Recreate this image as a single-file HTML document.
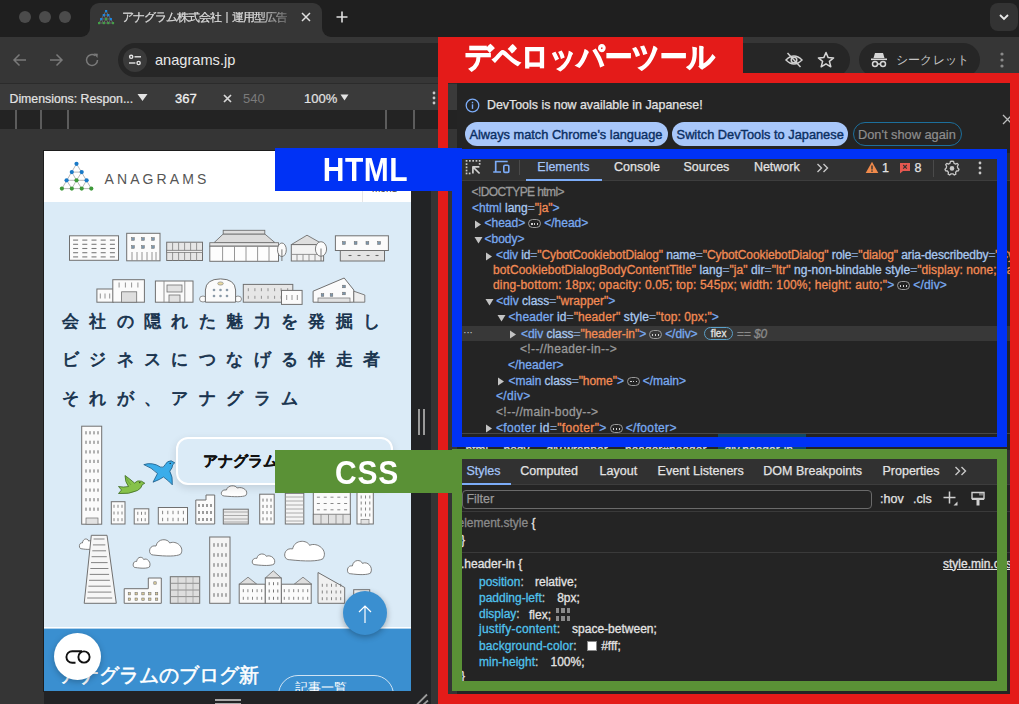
<!DOCTYPE html>
<html lang="ja">
<head>
<meta charset="utf-8">
<style>
*{box-sizing:border-box;margin:0;padding:0}
html,body{width:1019px;height:704px;overflow:hidden}
body{position:relative;background:#1f1f1f;font-family:"Liberation Sans",sans-serif;color:#e3e3e3}
.a{position:absolute}
.t{position:absolute;white-space:nowrap;line-height:1}
/* tab strip */
.dot{position:absolute;width:12px;height:12px;border-radius:50%;background:#4b4b4b;top:11px}
#tab{left:90px;top:3px;width:232px;height:34px;background:#363636;border-radius:9px 9px 0 0}
#toolbar{left:0;top:37px;width:1019px;height:46px;background:#363636}
#pill{left:118px;top:43px;width:732px;height:34px;border-radius:17px;background:#262626}
#incog{left:859px;top:43px;width:121px;height:34px;border-radius:17px;background:#262626}
#devbar{left:0;top:83px;width:457px;height:27px;background:#3a3a3a;border-top:1px solid #2b2b2b}
#ruler{left:0;top:110px;width:457px;height:19px;background:#232323}
#pagebg{left:0;top:129px;width:457px;height:575px;background:#353535}
#phone{left:44px;top:151px;width:367px;height:540px;background:#dbebf7;overflow:hidden;box-shadow:0 0 0 1px #1d1d1d}
#rres{left:411px;top:151px;width:20px;height:553px;background:#222325}
#bres{left:44px;top:691px;width:387px;height:13px;background:#222325}
/* devtools */
#dt{left:457px;top:83px;width:562px;height:621px;background:#242424}
.red{position:absolute;background:#e41b19}
.blue{position:absolute;background:#0032f5}
.green{position:absolute;background:#5a9136}
.dom{font-size:12px;-webkit-text-stroke-width:0.3px}
.ui{font-size:12.5px;color:#e3e3e3;-webkit-text-stroke-width:0.25px}
.css{font-size:12px;-webkit-text-stroke-width:0.3px}
.lbl{position:absolute;color:#fff;font-weight:bold;text-align:center;line-height:1}
</style>
</head>
<body>
<!-- tab strip -->
<div class="dot" style="left:19px"></div>
<div class="dot" style="left:39px"></div>
<div class="dot" style="left:59px"></div>
<div id="toolbar" class="a"></div>
<div id="tab" class="a"></div>
<div class="a" style="left:80px;top:27px;width:10px;height:10px;background:#363636"></div>
<div class="a" style="left:80px;top:26px;width:10px;height:11px;background:#1f1f1f;border-radius:0 0 9px 0"></div>
<div class="a" style="left:322px;top:27px;width:10px;height:10px;background:#363636"></div>
<div class="a" style="left:322px;top:26px;width:10px;height:11px;background:#1f1f1f;border-radius:0 0 0 9px"></div>
<svg class="a" style="left:96px;top:8px" width="20" height="18" viewBox="0 0 20 18">
<g stroke="#8a8a8a" stroke-width="0.6" fill="none"><path d="M10 3 L3 15 M10 3 L17 15 M7.7 7 L12.3 7 M5.1 11 L15 11 M3 15 L17 15 M7.7 7 L10 11 L12.3 7 M5.1 11 L7.7 15 L10 11 L12.3 15 L15 11"/></g>
<g fill="#1e88e5"><rect x="9" y="2" width="2.2" height="2.2"/><rect x="6.7" y="6" width="2.2" height="2.2"/><rect x="11.2" y="6" width="2.2" height="2.2"/><rect x="4.1" y="10" width="2.2" height="2.2"/><rect x="13.7" y="10" width="2.2" height="2.2"/></g>
<g fill="#43a047"><rect x="9" y="10" width="2.2" height="2.2"/><rect x="2" y="14" width="2.2" height="2.2"/><rect x="6.7" y="14" width="2.2" height="2.2"/><rect x="11.2" y="14" width="2.2" height="2.2"/><rect x="15.9" y="14" width="2.2" height="2.2"/></g>
</svg>
<div class="t" style="left:122px;top:11.5px;font-size:11.5px;letter-spacing:-1px;color:#dcdcdc;width:165px;overflow:hidden;-webkit-text-stroke-width:0.25px;-webkit-mask-image:linear-gradient(90deg,#000 82%,rgba(0,0,0,0.3))">アナグラム株式会社｜運用型広告代理店</div>
<svg class="a" style="left:300px;top:11px" width="12" height="12" viewBox="0 0 12 12"><path d="M2 2 L10 10 M10 2 L2 10" stroke="#e0e0e0" stroke-width="1.5"/></svg>
<svg class="a" style="left:336px;top:11px" width="12" height="12" viewBox="0 0 12 12"><path d="M6 0.5 V11.5 M0.5 6 H11.5" stroke="#e0e0e0" stroke-width="1.6"/></svg>
<div class="a" style="left:990px;top:3px;width:28px;height:28px;border-radius:8px;background:#333"></div>
<svg class="a" style="left:997px;top:11px" width="14" height="12" viewBox="0 0 14 12"><path d="M3 4 L7 8 L11 4" stroke="#e8e8e8" stroke-width="1.8" fill="none"/></svg>
<div id="pill" class="a"></div>
<div id="incog" class="a"></div>
<!-- toolbar icons -->
<svg class="a" style="left:12px;top:52px" width="16" height="16" viewBox="0 0 16 16"><path d="M14 8 H2.5 M7.5 2.5 L2 8 L7.5 13.5" stroke="#7a7a7a" stroke-width="1.5" fill="none"/></svg>
<svg class="a" style="left:48px;top:52px" width="16" height="16" viewBox="0 0 16 16"><path d="M2 8 H13.5 M8.5 2.5 L14 8 L8.5 13.5" stroke="#7a7a7a" stroke-width="1.5" fill="none"/></svg>
<svg class="a" style="left:84px;top:52px" width="16" height="16" viewBox="0 0 16 16"><path d="M13.5 8 A5.5 5.5 0 1 1 11.3 3.6" stroke="#7a7a7a" stroke-width="1.5" fill="none"/><path d="M9.5 1.5 L13.8 1.8 L13.5 6 Z" fill="#7a7a7a"/></svg>
<div class="a" style="left:123px;top:48px;width:24px;height:24px;border-radius:50%;background:#3a3a3a"></div>
<svg class="a" style="left:127px;top:52px" width="16" height="16" viewBox="0 0 16 16"><g stroke="#e6e6e6" stroke-width="1.4" fill="none"><circle cx="4.2" cy="4.8" r="1.6"/><path d="M7.5 4.8 H14"/><circle cx="11.6" cy="11" r="1.6"/><path d="M2 11 H8.4"/></g></svg>
<div class="t" style="left:155px;top:52.5px;font-size:14.6px;color:#e8e8e8">anagrams.jp</div>
<svg class="a" style="left:784px;top:50px" width="20" height="20" viewBox="0 0 20 20"><g stroke="#d0d0d0" stroke-width="1.5" fill="none"><path d="M2 10 Q10 2 18 10 Q10 18 2 10 Z"/><circle cx="10" cy="10" r="2.8"/><path d="M3.5 3 L16.5 17"/></g></svg>
<svg class="a" style="left:816px;top:50px" width="20" height="20" viewBox="0 0 20 20"><path d="M10 2.5 L12.2 7.6 L17.6 7.9 L13.4 11.4 L14.8 16.8 L10 13.8 L5.2 16.8 L6.6 11.4 L2.4 7.9 L7.8 7.6 Z" stroke="#d6d6d6" stroke-width="1.5" fill="none" stroke-linejoin="round"/></svg>
<svg class="a" style="left:869px;top:50px" width="20" height="20" viewBox="0 0 20 20"><g fill="#d6d6d6"><path d="M6 3 H14 L15.5 8 H4.5 Z"/><rect x="2" y="8.5" width="16" height="1.6"/></g><g stroke="#d6d6d6" stroke-width="1.5" fill="none"><circle cx="6" cy="14" r="2.5"/><circle cx="14" cy="14" r="2.5"/><path d="M8.5 14 H11.5"/></g></svg>
<div class="t" style="left:896px;top:54px;font-size:12px;color:#c4c4c4;letter-spacing:0.2px">シークレット</div>
<svg class="a" style="left:998px;top:51px" width="8" height="18" viewBox="0 0 8 18"><g fill="#8a8a8a"><circle cx="4" cy="3" r="1.6"/><circle cx="4" cy="9" r="1.6"/><circle cx="4" cy="15" r="1.6"/></g></svg>
<div id="devbar" class="a"></div>
<div id="ruler" class="a"></div>
<div id="pagebg" class="a"></div>
<div class="t" style="left:9.5px;top:92.5px;font-size:12.3px;color:#e3e3e3;-webkit-text-stroke-width:0.2px">Dimensions: Respon...</div>
<svg class="a" style="left:137px;top:93px" width="11" height="9" viewBox="0 0 11 9"><path d="M0.5 1 H10.5 L5.5 8 Z" fill="#e3e3e3"/></svg>
<div class="t" style="left:175px;top:91.5px;font-size:13px;color:#f0f0f0;-webkit-text-stroke-width:0.3px">367</div>
<svg class="a" style="left:222.5px;top:93.5px" width="9" height="9" viewBox="0 0 9 9"><path d="M1 1 L8 8 M8 1 L1 8" stroke="#d8d8d8" stroke-width="1.7"/></svg>
<div class="t" style="left:243px;top:91.5px;font-size:13px;color:#7a7a7a">540</div>
<div class="t" style="left:304px;top:91.5px;font-size:13px;color:#e3e3e3;-webkit-text-stroke-width:0.2px">100%</div>
<svg class="a" style="left:339.5px;top:94px" width="9" height="8" viewBox="0 0 9 8"><path d="M0.5 0.5 H8.5 L4.5 6.5 Z" fill="#e3e3e3"/></svg>
<svg class="a" style="left:431px;top:90px" width="6" height="16" viewBox="0 0 6 16"><g fill="#c8c8c8"><circle cx="3" cy="3" r="1.4"/><circle cx="3" cy="8" r="1.4"/><circle cx="3" cy="13" r="1.4"/></g></svg>
<div class="a" style="left:15px;top:110px;width:2px;height:19px;background:#5c5c5c"></div>
<div class="a" style="left:40px;top:110px;width:2px;height:19px;background:#5c5c5c"></div>
<div class="a" style="left:67px;top:110px;width:2px;height:19px;background:#5c5c5c"></div>
<div class="a" style="left:385px;top:110px;width:2px;height:19px;background:#5c5c5c"></div>
<div class="a" style="left:413px;top:110px;width:2px;height:19px;background:#5c5c5c"></div>
<div id="phone" class="a">
<svg class="a" style="left:0;top:0" width="367" height="540" viewBox="44 151 367 540">
<rect x="44" y="151" width="367" height="51" fill="#ffffff"/>
<rect x="362" y="151" width="1" height="51" fill="#e6e6e6"/>
<g stroke="#9a9a9a" stroke-width="0.7" fill="none"><path d="M76.5 163.8 L61.9 188.6 L91.3 188.6 Z M71.8 172.1 L81.7 172.1 M66.6 180.3 L86.6 180.3 M71.8 172.1 L76.5 180.3 L81.7 172.1 M66.6 180.3 L71.8 188.6 L76.5 180.3 L81.7 188.6 L86.6 180.3"/></g><circle cx="76.5" cy="163.8" r="2.1" fill="#1a7ac8"/><circle cx="71.8" cy="172.1" r="2.1" fill="#1a7ac8"/><circle cx="81.7" cy="172.1" r="2.1" fill="#1a7ac8"/><circle cx="66.6" cy="180.3" r="2.1" fill="#1a7ac8"/><circle cx="86.6" cy="180.3" r="2.1" fill="#1a7ac8"/><circle cx="76.5" cy="180.3" r="2.1" fill="#3f9a3a"/><circle cx="61.9" cy="188.6" r="2.1" fill="#3f9a3a"/><circle cx="71.8" cy="188.6" r="2.1" fill="#3f9a3a"/><circle cx="81.7" cy="188.6" r="2.1" fill="#3f9a3a"/><circle cx="91.3" cy="188.6" r="2.1" fill="#3f9a3a"/>
<rect x="69.5" y="235.8" width="49.0" height="24.5" fill="#fbfbfb" stroke="#707070" stroke-width="1"/>
<path d="M73.1 240.1 L78.1 240.1" stroke="#7a7a7a" stroke-width="1.1"/>
<path d="M82.3 240.1 L87.3 240.1" stroke="#7a7a7a" stroke-width="1.1"/>
<path d="M91.5 240.1 L96.5 240.1" stroke="#7a7a7a" stroke-width="1.1"/>
<path d="M100.7 240.1 L105.7 240.1" stroke="#7a7a7a" stroke-width="1.1"/>
<path d="M109.9 240.1 L114.9 240.1" stroke="#7a7a7a" stroke-width="1.1"/>
<path d="M73.1 244.3 L78.1 244.3" stroke="#7a7a7a" stroke-width="1.1"/>
<path d="M82.3 244.3 L87.3 244.3" stroke="#7a7a7a" stroke-width="1.1"/>
<path d="M91.5 244.3 L96.5 244.3" stroke="#7a7a7a" stroke-width="1.1"/>
<path d="M100.7 244.3 L105.7 244.3" stroke="#7a7a7a" stroke-width="1.1"/>
<path d="M109.9 244.3 L114.9 244.3" stroke="#7a7a7a" stroke-width="1.1"/>
<path d="M73.1 248.5 L78.1 248.5" stroke="#7a7a7a" stroke-width="1.1"/>
<path d="M82.3 248.5 L87.3 248.5" stroke="#7a7a7a" stroke-width="1.1"/>
<path d="M91.5 248.5 L96.5 248.5" stroke="#7a7a7a" stroke-width="1.1"/>
<path d="M100.7 248.5 L105.7 248.5" stroke="#7a7a7a" stroke-width="1.1"/>
<path d="M109.9 248.5 L114.9 248.5" stroke="#7a7a7a" stroke-width="1.1"/>
<path d="M73.1 252.7 L78.1 252.7" stroke="#7a7a7a" stroke-width="1.1"/>
<path d="M82.3 252.7 L87.3 252.7" stroke="#7a7a7a" stroke-width="1.1"/>
<path d="M91.5 252.7 L96.5 252.7" stroke="#7a7a7a" stroke-width="1.1"/>
<path d="M100.7 252.7 L105.7 252.7" stroke="#7a7a7a" stroke-width="1.1"/>
<path d="M109.9 252.7 L114.9 252.7" stroke="#7a7a7a" stroke-width="1.1"/>
<path d="M73.1 256.9 L78.1 256.9" stroke="#7a7a7a" stroke-width="1.1"/>
<path d="M82.3 256.9 L87.3 256.9" stroke="#7a7a7a" stroke-width="1.1"/>
<path d="M91.5 256.9 L96.5 256.9" stroke="#7a7a7a" stroke-width="1.1"/>
<path d="M100.7 256.9 L105.7 256.9" stroke="#7a7a7a" stroke-width="1.1"/>
<path d="M109.9 256.9 L114.9 256.9" stroke="#7a7a7a" stroke-width="1.1"/>
<rect x="126.7" y="233.3" width="33.3" height="27.5" fill="#fbfbfb" stroke="#707070" stroke-width="1"/>
<rect x="131.7" y="237.7" width="2.6" height="2.6" fill="#7c97ad" stroke="#666" stroke-width="0.5"/>
<rect x="141.7" y="237.7" width="2.6" height="2.6" fill="#7c97ad" stroke="#666" stroke-width="0.5"/>
<rect x="151.7" y="237.7" width="2.6" height="2.6" fill="#7c97ad" stroke="#666" stroke-width="0.5"/>
<rect x="131.7" y="245.7" width="2.6" height="2.6" fill="#7c97ad" stroke="#666" stroke-width="0.5"/>
<rect x="141.7" y="245.7" width="2.6" height="2.6" fill="#7c97ad" stroke="#666" stroke-width="0.5"/>
<rect x="151.7" y="245.7" width="2.6" height="2.6" fill="#7c97ad" stroke="#666" stroke-width="0.5"/>
<path d="M132.0 252.0 L132.0 260.5" stroke="#888" stroke-width="0.9"/>
<path d="M137.0 252.0 L137.0 260.5" stroke="#888" stroke-width="0.9"/>
<path d="M142.0 252.0 L142.0 260.5" stroke="#888" stroke-width="0.9"/>
<path d="M147.0 252.0 L147.0 260.5" stroke="#888" stroke-width="0.9"/>
<path d="M152.0 252.0 L152.0 260.5" stroke="#888" stroke-width="0.9"/>
<path d="M156.0 252.0 L156.0 260.5" stroke="#888" stroke-width="0.9"/>
<rect x="166.7" y="242.2" width="35.8" height="18.3" fill="#e6e6e6" stroke="#707070" stroke-width="1"/>
<path d="M172.6 242.2 L172.6 260.5" stroke="#8a8a8a" stroke-width="0.9"/>
<path d="M178.6 242.2 L178.6 260.5" stroke="#8a8a8a" stroke-width="0.9"/>
<path d="M184.6 242.2 L184.6 260.5" stroke="#8a8a8a" stroke-width="0.9"/>
<path d="M190.6 242.2 L190.6 260.5" stroke="#8a8a8a" stroke-width="0.9"/>
<path d="M196.6 242.2 L196.6 260.5" stroke="#8a8a8a" stroke-width="0.9"/>
<rect x="166.7" y="250.3" width="35.8" height="2.0" fill="#fbfbfb" stroke="#707070" stroke-width="0.8"/>
<rect x="223.2" y="230.3" width="41.6" height="3.9" fill="#dedede" stroke="#707070" stroke-width="0.9"/>
<path d="M214 242.7 L223 234.2 L265 234.2 L275 242.7 Z" fill="#dcdcdc" stroke="#707070" stroke-width="0.9" stroke-linejoin="round"/>
<rect x="209.8" y="242.7" width="68.7" height="3.5" fill="#e8e8e8" stroke="#707070" stroke-width="0.9"/>
<rect x="209.8" y="246.2" width="68.7" height="15.1" fill="#fdfdfd" stroke="#707070" stroke-width="1"/>
<path d="M222.6 246.2 L222.6 261.3" stroke="#8a8a8a" stroke-width="0.9"/>
<path d="M234.5 246.2 L234.5 261.3" stroke="#8a8a8a" stroke-width="0.9"/>
<path d="M246.0 246.2 L246.0 261.3" stroke="#8a8a8a" stroke-width="0.9"/>
<path d="M257.6 246.2 L257.6 261.3" stroke="#8a8a8a" stroke-width="0.9"/>
<path d="M269.0 246.2 L269.0 261.3" stroke="#8a8a8a" stroke-width="0.9"/>
<ellipse cx="281.9" cy="249.8" rx="4.4" ry="6.8" fill="#fbfbfb" stroke="#707070" stroke-width="0.9"/>
<path d="M281.9 249.3 L281.9 261.0" stroke="#777" stroke-width="1"/>
<path d="M291.3 244.6 L307 235.2 L323.6 244.6 Z" fill="#dedede" stroke="#707070" stroke-width="0.9" stroke-linejoin="round"/>
<rect x="291.3" y="244.6" width="32.3" height="16.4" fill="#f2f2f2" stroke="#707070" stroke-width="1"/>
<path d="M291.3 254.4 L323.6 254.4" stroke="#888" stroke-width="0.9"/>
<path d="M297.0 254.4 L297.0 261.0" stroke="#8a8a8a" stroke-width="0.9"/>
<path d="M303.0 254.4 L303.0 261.0" stroke="#8a8a8a" stroke-width="0.9"/>
<path d="M309.0 254.4 L309.0 261.0" stroke="#8a8a8a" stroke-width="0.9"/>
<path d="M315.0 254.4 L315.0 261.0" stroke="#8a8a8a" stroke-width="0.9"/>
<ellipse cx="321.0" cy="249.0" rx="5.6" ry="7.3" fill="#fbfbfb" stroke="#707070" stroke-width="0.9"/>
<path d="M321.0 248.5 L321.0 261.0" stroke="#777" stroke-width="1"/>
<rect x="340.3" y="250.5" width="44.2" height="10.5" fill="#e4e4e4" stroke="#707070" stroke-width="1"/>
<path d="M348.5 255.5 L351.5 255.5" stroke="#666" stroke-width="1.1"/>
<path d="M357.5 255.5 L360.5 255.5" stroke="#666" stroke-width="1.1"/>
<path d="M366.5 255.5 L369.5 255.5" stroke="#666" stroke-width="1.1"/>
<path d="M375.5 255.5 L378.5 255.5" stroke="#666" stroke-width="1.1"/>
<rect x="335.4" y="235.8" width="53.0" height="14.7" fill="#fbfbfb" stroke="#707070" stroke-width="1"/>
<rect x="342.5" y="241.6" width="2.8" height="2.8" fill="#7c97ad" stroke="#666" stroke-width="0.5"/>
<rect x="354.2" y="241.6" width="2.8" height="2.8" fill="#7c97ad" stroke="#666" stroke-width="0.5"/>
<rect x="366.0" y="241.6" width="2.8" height="2.8" fill="#7c97ad" stroke="#666" stroke-width="0.5"/>
<rect x="377.7" y="241.6" width="2.8" height="2.8" fill="#7c97ad" stroke="#666" stroke-width="0.5"/>
<rect x="96.9" y="289" width="16.5" height="13.2" fill="#fbfbfb" stroke="#707070" stroke-width="1"/>
<path d="M100.3 293.5 L100.3 298.5" stroke="#888" stroke-width="0.9"/>
<path d="M105.0 293.5 L105.0 298.5" stroke="#888" stroke-width="0.9"/>
<path d="M109.7 293.5 L109.7 298.5" stroke="#888" stroke-width="0.9"/>
<rect x="112.8" y="279.7" width="31.6" height="22.5" fill="#fbfbfb" stroke="#707070" stroke-width="1"/>
<rect x="121.6" y="291.8" width="15.1" height="10.4" fill="#dedede" stroke="#707070" stroke-width="0.8"/>
<path d="M119.1 282.5 L119.1 287.5" stroke="#888" stroke-width="0.9"/>
<path d="M125.4 282.5 L125.4 287.5" stroke="#888" stroke-width="0.9"/>
<path d="M131.6 282.5 L131.6 287.5" stroke="#888" stroke-width="0.9"/>
<path d="M137.9 282.5 L137.9 287.5" stroke="#888" stroke-width="0.9"/>
<rect x="155.4" y="281" width="37.6" height="21.2" fill="#fbfbfb" stroke="#707070" stroke-width="1"/>
<path d="M164.0 281.0 L164.0 302.2" stroke="#888" stroke-width="0.9"/>
<path d="M184.8 281.0 L184.8 302.2" stroke="#888" stroke-width="0.9"/>
<rect x="167" y="285" width="15.0" height="7.0" fill="#e2e2e2" stroke="#707070" stroke-width="0.8"/>
<rect x="169" y="295" width="11.0" height="7.2" fill="#e2e2e2" stroke="#707070" stroke-width="0.8"/>
<ellipse cx="203" cy="299" rx="3.5" ry="3" fill="#fbfbfb" stroke="#777" stroke-width="0.8"/>
<ellipse cx="238" cy="299" rx="3.5" ry="3" fill="#fbfbfb" stroke="#777" stroke-width="0.8"/>
<path d="M205.4 302.2 L205.4 290 Q206 279 220.5 278.9 Q235 279 235.6 290 L235.6 302.2 Z" fill="#fbfbfb" stroke="#707070" stroke-width="1" stroke-linejoin="round"/>
<ellipse cx="220.5" cy="283.5" rx="2.8" ry="1.6" fill="#e8d9a0" stroke="#777" stroke-width="0.6"/>
<circle cx="214" cy="290" r="1.3" fill="#8a9aa8"/>
<circle cx="220.5" cy="290" r="1.3" fill="#8a9aa8"/>
<circle cx="227" cy="290" r="1.3" fill="#8a9aa8"/>
<circle cx="214" cy="296" r="1.3" fill="#8a9aa8"/>
<circle cx="220.5" cy="296" r="1.3" fill="#8a9aa8"/>
<circle cx="227" cy="296" r="1.3" fill="#8a9aa8"/>
<rect x="243.3" y="284.4" width="49.5" height="17.8" fill="#e6e6e6" stroke="#707070" stroke-width="1"/>
<path d="M248.3 288.2 L248.3 291.2" stroke="#888" stroke-width="0.9"/>
<path d="M254.9 288.2 L254.9 291.2" stroke="#888" stroke-width="0.9"/>
<path d="M261.4 288.2 L261.4 291.2" stroke="#888" stroke-width="0.9"/>
<path d="M268.0 288.2 L268.0 291.2" stroke="#888" stroke-width="0.9"/>
<path d="M274.6 288.2 L274.6 291.2" stroke="#888" stroke-width="0.9"/>
<path d="M281.1 288.2 L281.1 291.2" stroke="#888" stroke-width="0.9"/>
<path d="M287.7 288.2 L287.7 291.2" stroke="#888" stroke-width="0.9"/>
<path d="M248.3 295.8 L248.3 298.8" stroke="#888" stroke-width="0.9"/>
<path d="M254.9 295.8 L254.9 298.8" stroke="#888" stroke-width="0.9"/>
<path d="M261.4 295.8 L261.4 298.8" stroke="#888" stroke-width="0.9"/>
<path d="M268.0 295.8 L268.0 298.8" stroke="#888" stroke-width="0.9"/>
<path d="M274.6 295.8 L274.6 298.8" stroke="#888" stroke-width="0.9"/>
<path d="M281.1 295.8 L281.1 298.8" stroke="#888" stroke-width="0.9"/>
<path d="M287.7 295.8 L287.7 298.8" stroke="#888" stroke-width="0.9"/>
<rect x="281.5" y="290.4" width="20.6" height="14.0" fill="#fbfbfb" stroke="#707070" stroke-width="1"/>
<path d="M286.7 295.0 L286.7 300.0" stroke="#888" stroke-width="0.9"/>
<path d="M292.0 295.0 L292.0 300.0" stroke="#888" stroke-width="0.9"/>
<path d="M297.3 295.0 L297.3 300.0" stroke="#888" stroke-width="0.9"/>
<path d="M313.1 291.2 L344.2 278 L353.8 290 L353.8 302.2 L313.1 302.2 Z" fill="#fbfbfb" stroke="#707070" stroke-width="1" stroke-linejoin="round"/>
<path d="M353.8 291.2 L364.8 295 L364.8 302.2 L353.8 302.2 Z" fill="#eeeeee" stroke="#707070" stroke-width="0.9" stroke-linejoin="round"/>
<rect x="318" y="298" width="32.0" height="4.2" fill="#e2e2e2" stroke="#707070" stroke-width="0.7"/>
<rect x="321.2" y="293.7" width="2.6" height="2.6" fill="#7c97ad" stroke="#666" stroke-width="0.5"/>
<rect x="330.2" y="293.7" width="2.6" height="2.6" fill="#7c97ad" stroke="#666" stroke-width="0.5"/>
<rect x="342.7" y="285.2" width="2.6" height="2.6" fill="#7c97ad" stroke="#666" stroke-width="0.5"/>
<rect x="342.7" y="292.2" width="2.6" height="2.6" fill="#7c97ad" stroke="#666" stroke-width="0.5"/>
<rect x="81.7" y="426.2" width="20.0" height="98.0" fill="#fbfbfb" stroke="#707070" stroke-width="1"/>
<path d="M86.0 431.2 L86.0 434.4" stroke="#666" stroke-width="1"/>
<path d="M90.0 431.2 L90.0 434.4" stroke="#666" stroke-width="1"/>
<path d="M94.0 431.2 L94.0 434.4" stroke="#666" stroke-width="1"/>
<path d="M98.0 431.2 L98.0 434.4" stroke="#666" stroke-width="1"/>
<path d="M86.0 440.7 L86.0 443.9" stroke="#666" stroke-width="1"/>
<path d="M90.0 440.7 L90.0 443.9" stroke="#666" stroke-width="1"/>
<path d="M94.0 440.7 L94.0 443.9" stroke="#666" stroke-width="1"/>
<path d="M98.0 440.7 L98.0 443.9" stroke="#666" stroke-width="1"/>
<path d="M86.0 450.3 L86.0 453.5" stroke="#666" stroke-width="1"/>
<path d="M90.0 450.3 L90.0 453.5" stroke="#666" stroke-width="1"/>
<path d="M94.0 450.3 L94.0 453.5" stroke="#666" stroke-width="1"/>
<path d="M98.0 450.3 L98.0 453.5" stroke="#666" stroke-width="1"/>
<path d="M86.0 459.8 L86.0 463.0" stroke="#666" stroke-width="1"/>
<path d="M90.0 459.8 L90.0 463.0" stroke="#666" stroke-width="1"/>
<path d="M94.0 459.8 L94.0 463.0" stroke="#666" stroke-width="1"/>
<path d="M98.0 459.8 L98.0 463.0" stroke="#666" stroke-width="1"/>
<path d="M86.0 469.4 L86.0 472.6" stroke="#666" stroke-width="1"/>
<path d="M90.0 469.4 L90.0 472.6" stroke="#666" stroke-width="1"/>
<path d="M94.0 469.4 L94.0 472.6" stroke="#666" stroke-width="1"/>
<path d="M98.0 469.4 L98.0 472.6" stroke="#666" stroke-width="1"/>
<path d="M86.0 479.0 L86.0 482.2" stroke="#666" stroke-width="1"/>
<path d="M90.0 479.0 L90.0 482.2" stroke="#666" stroke-width="1"/>
<path d="M94.0 479.0 L94.0 482.2" stroke="#666" stroke-width="1"/>
<path d="M98.0 479.0 L98.0 482.2" stroke="#666" stroke-width="1"/>
<path d="M86.0 488.5 L86.0 491.7" stroke="#666" stroke-width="1"/>
<path d="M90.0 488.5 L90.0 491.7" stroke="#666" stroke-width="1"/>
<path d="M94.0 488.5 L94.0 491.7" stroke="#666" stroke-width="1"/>
<path d="M98.0 488.5 L98.0 491.7" stroke="#666" stroke-width="1"/>
<path d="M86.0 498.1 L86.0 501.3" stroke="#666" stroke-width="1"/>
<path d="M90.0 498.1 L90.0 501.3" stroke="#666" stroke-width="1"/>
<path d="M94.0 498.1 L94.0 501.3" stroke="#666" stroke-width="1"/>
<path d="M98.0 498.1 L98.0 501.3" stroke="#666" stroke-width="1"/>
<path d="M86.0 507.6 L86.0 510.8" stroke="#666" stroke-width="1"/>
<path d="M90.0 507.6 L90.0 510.8" stroke="#666" stroke-width="1"/>
<path d="M94.0 507.6 L94.0 510.8" stroke="#666" stroke-width="1"/>
<path d="M98.0 507.6 L98.0 510.8" stroke="#666" stroke-width="1"/>
<rect x="86" y="518" width="12.0" height="6.2" fill="#e2e2e2" stroke="#707070" stroke-width="0.7"/>
<rect x="111.3" y="501.7" width="13.7" height="22.3" fill="#fbfbfb" stroke="#707070" stroke-width="1"/>
<path d="M114.0 504.8 L114.0 507.8" stroke="#777" stroke-width="0.9"/>
<path d="M118.0 504.8 L118.0 507.8" stroke="#777" stroke-width="0.9"/>
<path d="M122.0 504.8 L122.0 507.8" stroke="#777" stroke-width="0.9"/>
<path d="M114.0 511.5 L114.0 514.5" stroke="#777" stroke-width="0.9"/>
<path d="M118.0 511.5 L118.0 514.5" stroke="#777" stroke-width="0.9"/>
<path d="M122.0 511.5 L122.0 514.5" stroke="#777" stroke-width="0.9"/>
<path d="M114.0 518.2 L114.0 521.2" stroke="#777" stroke-width="0.9"/>
<path d="M118.0 518.2 L118.0 521.2" stroke="#777" stroke-width="0.9"/>
<path d="M122.0 518.2 L122.0 521.2" stroke="#777" stroke-width="0.9"/>
<rect x="134.2" y="508.8" width="14.6" height="15.2" fill="#fbfbfb" stroke="#707070" stroke-width="1"/>
<path d="M137.8 511.8 L137.8 514.8" stroke="#777" stroke-width="0.9"/>
<path d="M141.5 511.8 L141.5 514.8" stroke="#777" stroke-width="0.9"/>
<path d="M145.2 511.8 L145.2 514.8" stroke="#777" stroke-width="0.9"/>
<path d="M137.8 518.2 L137.8 521.2" stroke="#777" stroke-width="0.9"/>
<path d="M141.5 518.2 L141.5 521.2" stroke="#777" stroke-width="0.9"/>
<path d="M145.2 518.2 L145.2 521.2" stroke="#777" stroke-width="0.9"/>
<rect x="158.3" y="507.5" width="29.2" height="16.5" fill="#fbfbfb" stroke="#707070" stroke-width="1"/>
<path d="M162.6 510.8 L162.6 514.2" stroke="#777" stroke-width="0.9"/>
<path d="M167.8 510.8 L167.8 514.2" stroke="#777" stroke-width="0.9"/>
<path d="M173.0 510.8 L173.0 514.2" stroke="#777" stroke-width="0.9"/>
<path d="M178.2 510.8 L178.2 514.2" stroke="#777" stroke-width="0.9"/>
<path d="M183.4 510.8 L183.4 514.2" stroke="#777" stroke-width="0.9"/>
<path d="M162.6 517.8 L162.6 521.2" stroke="#777" stroke-width="0.9"/>
<path d="M167.8 517.8 L167.8 521.2" stroke="#777" stroke-width="0.9"/>
<path d="M173.0 517.8 L173.0 521.2" stroke="#777" stroke-width="0.9"/>
<path d="M178.2 517.8 L178.2 521.2" stroke="#777" stroke-width="0.9"/>
<path d="M183.4 517.8 L183.4 521.2" stroke="#777" stroke-width="0.9"/>
<path d="M195.8 524 L195.8 500 L206 500 L206 495 L214.7 495 L214.7 524 Z" fill="#fbfbfb" stroke="#707070" stroke-width="1" stroke-linejoin="round"/>
<path d="M199.0 504.0 L199.0 507.0" stroke="#666" stroke-width="1.3"/>
<path d="M203.0 504.0 L203.0 507.0" stroke="#666" stroke-width="1.3"/>
<path d="M207.0 504.0 L207.0 507.0" stroke="#666" stroke-width="1.3"/>
<path d="M211.0 504.0 L211.0 507.0" stroke="#666" stroke-width="1.3"/>
<path d="M199.0 511.0 L199.0 514.0" stroke="#666" stroke-width="1.3"/>
<path d="M203.0 511.0 L203.0 514.0" stroke="#666" stroke-width="1.3"/>
<path d="M207.0 511.0 L207.0 514.0" stroke="#666" stroke-width="1.3"/>
<path d="M211.0 511.0 L211.0 514.0" stroke="#666" stroke-width="1.3"/>
<path d="M199.0 518.0 L199.0 521.0" stroke="#666" stroke-width="1.3"/>
<path d="M203.0 518.0 L203.0 521.0" stroke="#666" stroke-width="1.3"/>
<path d="M207.0 518.0 L207.0 521.0" stroke="#666" stroke-width="1.3"/>
<path d="M211.0 518.0 L211.0 521.0" stroke="#666" stroke-width="1.3"/>
<rect x="223.3" y="509.2" width="25.0" height="14.8" fill="#ececec" stroke="#707070" stroke-width="1"/>
<path d="M223.3 512.0 L248.3 512.0" stroke="#999" stroke-width="0.8"/>
<path d="M223.3 515.5 L248.3 515.5" stroke="#999" stroke-width="0.8"/>
<path d="M223.3 519.0 L248.3 519.0" stroke="#999" stroke-width="0.8"/>
<path d="M223.3 522.0 L248.3 522.0" stroke="#999" stroke-width="0.8"/>
<rect x="259.7" y="494.2" width="14.5" height="29.8" fill="#fbfbfb" stroke="#707070" stroke-width="1"/>
<path d="M263.0 498.6 L263.0 501.6" stroke="#666" stroke-width="0.9"/>
<path d="M267.0 498.6 L267.0 501.6" stroke="#666" stroke-width="0.9"/>
<path d="M271.0 498.6 L271.0 501.6" stroke="#666" stroke-width="0.9"/>
<path d="M263.0 504.9 L263.0 507.9" stroke="#666" stroke-width="0.9"/>
<path d="M267.0 504.9 L267.0 507.9" stroke="#666" stroke-width="0.9"/>
<path d="M271.0 504.9 L271.0 507.9" stroke="#666" stroke-width="0.9"/>
<path d="M263.0 511.1 L263.0 514.1" stroke="#666" stroke-width="0.9"/>
<path d="M267.0 511.1 L267.0 514.1" stroke="#666" stroke-width="0.9"/>
<path d="M271.0 511.1 L271.0 514.1" stroke="#666" stroke-width="0.9"/>
<path d="M263.0 517.4 L263.0 520.4" stroke="#666" stroke-width="0.9"/>
<path d="M267.0 517.4 L267.0 520.4" stroke="#666" stroke-width="0.9"/>
<path d="M271.0 517.4 L271.0 520.4" stroke="#666" stroke-width="0.9"/>
<rect x="285.3" y="493.3" width="18.5" height="30.7" fill="#f4f4f4" stroke="#707070" stroke-width="1"/>
<path d="M285.3 497.0 L303.8 497.0" stroke="#999" stroke-width="0.8"/>
<path d="M285.3 501.0 L303.8 501.0" stroke="#999" stroke-width="0.8"/>
<path d="M285.3 505.0 L303.8 505.0" stroke="#999" stroke-width="0.8"/>
<path d="M285.3 509.0 L303.8 509.0" stroke="#999" stroke-width="0.8"/>
<path d="M285.3 513.0 L303.8 513.0" stroke="#999" stroke-width="0.8"/>
<path d="M285.3 517.0 L303.8 517.0" stroke="#999" stroke-width="0.8"/>
<path d="M285.3 521.0 L303.8 521.0" stroke="#999" stroke-width="0.8"/>
<rect x="313.3" y="492" width="37.0" height="32.0" fill="#fbfbfb" stroke="#707070" stroke-width="1"/>
<path d="M316.9 497.2 L319.9 497.2" stroke="#888" stroke-width="1"/>
<path d="M323.7 497.2 L326.7 497.2" stroke="#888" stroke-width="1"/>
<path d="M330.5 497.2 L333.5 497.2" stroke="#888" stroke-width="1"/>
<path d="M337.3 497.2 L340.3 497.2" stroke="#888" stroke-width="1"/>
<path d="M344.1 497.2 L347.1 497.2" stroke="#888" stroke-width="1"/>
<path d="M316.9 503.5 L319.9 503.5" stroke="#888" stroke-width="1"/>
<path d="M323.7 503.5 L326.7 503.5" stroke="#888" stroke-width="1"/>
<path d="M330.5 503.5 L333.5 503.5" stroke="#888" stroke-width="1"/>
<path d="M337.3 503.5 L340.3 503.5" stroke="#888" stroke-width="1"/>
<path d="M344.1 503.5 L347.1 503.5" stroke="#888" stroke-width="1"/>
<path d="M316.9 509.8 L319.9 509.8" stroke="#888" stroke-width="1"/>
<path d="M323.7 509.8 L326.7 509.8" stroke="#888" stroke-width="1"/>
<path d="M330.5 509.8 L333.5 509.8" stroke="#888" stroke-width="1"/>
<path d="M337.3 509.8 L340.3 509.8" stroke="#888" stroke-width="1"/>
<path d="M344.1 509.8 L347.1 509.8" stroke="#888" stroke-width="1"/>
<rect x="313.3" y="514.2" width="37.0" height="9.8" fill="#e2e2e2" stroke="#707070" stroke-width="0.8"/>
<path d="M321.0 514.2 L321.0 524.0" stroke="#888" stroke-width="0.8"/>
<path d="M328.5 514.2 L328.5 524.0" stroke="#888" stroke-width="0.8"/>
<path d="M336.0 514.2 L336.0 524.0" stroke="#888" stroke-width="0.8"/>
<path d="M343.0 514.2 L343.0 524.0" stroke="#888" stroke-width="0.8"/>
<rect x="357" y="492" width="16.3" height="32.0" fill="#fbfbfb" stroke="#707070" stroke-width="1"/>
<path d="M361.2 495.5 L361.2 498.5" stroke="#777" stroke-width="0.9"/>
<path d="M365.5 495.5 L365.5 498.5" stroke="#777" stroke-width="0.9"/>
<path d="M369.8 495.5 L369.8 498.5" stroke="#777" stroke-width="0.9"/>
<path d="M361.2 501.5 L361.2 504.5" stroke="#777" stroke-width="0.9"/>
<path d="M365.5 501.5 L365.5 504.5" stroke="#777" stroke-width="0.9"/>
<path d="M369.8 501.5 L369.8 504.5" stroke="#777" stroke-width="0.9"/>
<path d="M361.2 507.5 L361.2 510.5" stroke="#777" stroke-width="0.9"/>
<path d="M365.5 507.5 L365.5 510.5" stroke="#777" stroke-width="0.9"/>
<path d="M369.8 507.5 L369.8 510.5" stroke="#777" stroke-width="0.9"/>
<path d="M361.2 513.5 L361.2 516.5" stroke="#777" stroke-width="0.9"/>
<path d="M365.5 513.5 L365.5 516.5" stroke="#777" stroke-width="0.9"/>
<path d="M369.8 513.5 L369.8 516.5" stroke="#777" stroke-width="0.9"/>
<rect x="361" y="519.5" width="8.0" height="4.5" fill="#e2e2e2" stroke="#707070" stroke-width="0.6"/>
<path d="M224.2 496.0 C219.7 496.0 220.5 489.0 226.4 490.0 C227.8 484.5 235.8 485.0 237.2 488.0 C242.6 486.0 249.3 491.0 245.8 495.5 C242.6 497.0 234.5 497.0 224.2 496.0 Z" fill="#ffffff" stroke="#707070" stroke-width="0.9" stroke-linejoin="round"/>
<path d="M144.8 483.2 L141.5 481.2 Q137.5 479.8 134.5 483 Q130 479 125 475.5 Q125 482 128.5 486.5 Q123.5 487.5 118.5 486.5 L121.5 490 L118.5 493.5 Q129 494.5 137.5 490.5 Q141.8 488 142.2 484.8 Z" fill="#86c24a" stroke="#3d6b22" stroke-width="0.8" stroke-linejoin="round"/>
<path d="M126 477 Q128 482 131 485" stroke="#5a9a30" stroke-width="0.6" fill="none"/>
<circle cx="139.8" cy="482.6" r="0.7" fill="#222"/>
<path d="M174.8 462.8 L171.2 460.8 Q167 460.8 165.3 464.5 Q163.5 468.5 160.5 467 Q152.5 461.8 143.8 464.6 Q151.5 467.5 157.5 473.5 L153 482.2 Q160 479.5 163.5 477 L168.5 481 L172.3 484.8 Q173 476.5 169.8 471.2 Q172.8 467.5 172.7 464.8 Z" fill="#3badea" stroke="#1d5a85" stroke-width="0.8" stroke-linejoin="round"/>
<circle cx="170.2" cy="463.4" r="0.7" fill="#222"/>
<path d="M81.1 548.7 C78.4 548.7 78.9 542.1 82.4 543.0 C83.2 537.8 87.9 538.2 88.7 541.1 C91.8 539.2 95.8 544.0 93.7 548.2 C91.8 549.7 87.1 549.7 81.1 548.7 Z" fill="#ffffff" stroke="#707070" stroke-width="0.9" stroke-linejoin="round"/>
<path d="M91.3 535.3 L107 535.3 L116.3 603.3 L84.2 603.3 Z" fill="#f6f6f6" stroke="#707070" stroke-width="1" stroke-linejoin="round"/>
<path d="M93.6 539.0 L104.5 539.0" stroke="#777" stroke-width="0.9"/>
<path d="M92.9 544.9 L105.3 544.9" stroke="#777" stroke-width="0.9"/>
<path d="M92.3 550.8 L106.1 550.8" stroke="#777" stroke-width="0.9"/>
<path d="M91.6 556.7 L106.8 556.7" stroke="#777" stroke-width="0.9"/>
<path d="M91.0 562.6 L107.6 562.6" stroke="#777" stroke-width="0.9"/>
<path d="M90.3 568.5 L108.4 568.5" stroke="#777" stroke-width="0.9"/>
<path d="M89.7 574.4 L109.1 574.4" stroke="#777" stroke-width="0.9"/>
<path d="M89.0 580.3 L109.9 580.3" stroke="#777" stroke-width="0.9"/>
<path d="M88.4 586.2 L110.7 586.2" stroke="#777" stroke-width="0.9"/>
<path d="M87.7 592.1 L111.4 592.1" stroke="#777" stroke-width="0.9"/>
<path d="M87.1 598.0 L112.2 598.0" stroke="#777" stroke-width="0.9"/>
<path d="M153.3 555.0 C147.5 555.0 148.5 544.5 156.0 546.0 C157.7 537.8 168.0 538.5 169.7 543.0 C176.5 540.0 185.0 547.5 180.6 554.2 C176.5 556.5 166.2 556.5 153.3 555.0 Z" fill="#ffffff" stroke="#707070" stroke-width="0.9" stroke-linejoin="round"/>
<path d="M135.1 567.5 C132.1 567.5 132.6 560.5 136.6 561.5 C137.4 556.0 142.8 556.5 143.7 559.5 C147.2 557.5 151.7 562.5 149.4 567.0 C147.2 568.5 141.9 568.5 135.1 567.5 Z" fill="#ffffff" stroke="#707070" stroke-width="0.9" stroke-linejoin="round"/>
<path d="M124.2 603.3 L124.2 588.7 L148.3 588.7 L148.3 578 L161.3 578 L161.3 603.3 Z" fill="#fbfbfb" stroke="#707070" stroke-width="1" stroke-linejoin="round"/>
<rect x="128.2" y="592.5" width="2.4" height="2.4" fill="#d8c99a" stroke="#666" stroke-width="0.5"/>
<rect x="135.0" y="592.5" width="2.4" height="2.4" fill="#d8c99a" stroke="#666" stroke-width="0.5"/>
<rect x="141.8" y="592.5" width="2.4" height="2.4" fill="#d8c99a" stroke="#666" stroke-width="0.5"/>
<rect x="148.6" y="592.5" width="2.4" height="2.4" fill="#d8c99a" stroke="#666" stroke-width="0.5"/>
<rect x="155.4" y="592.5" width="2.4" height="2.4" fill="#d8c99a" stroke="#666" stroke-width="0.5"/>
<rect x="128.2" y="598.0" width="2.4" height="2.4" fill="#d8c99a" stroke="#666" stroke-width="0.5"/>
<rect x="135.0" y="598.0" width="2.4" height="2.4" fill="#d8c99a" stroke="#666" stroke-width="0.5"/>
<rect x="141.8" y="598.0" width="2.4" height="2.4" fill="#d8c99a" stroke="#666" stroke-width="0.5"/>
<rect x="148.6" y="598.0" width="2.4" height="2.4" fill="#d8c99a" stroke="#666" stroke-width="0.5"/>
<rect x="155.4" y="598.0" width="2.4" height="2.4" fill="#d8c99a" stroke="#666" stroke-width="0.5"/>
<rect x="153.8" y="581.8" width="2.4" height="2.4" fill="#d8c99a" stroke="#666" stroke-width="0.5"/>
<rect x="170.3" y="576.7" width="29.4" height="26.6" fill="#dedede" stroke="#707070" stroke-width="1"/>
<path d="M170.3 583.3 L199.7 583.3" stroke="#888" stroke-width="0.9"/>
<path d="M170.3 590.0 L199.7 590.0" stroke="#888" stroke-width="0.9"/>
<path d="M170.3 596.6 L199.7 596.6" stroke="#888" stroke-width="0.9"/>
<path d="M178.0 576.7 L178.0 603.3" stroke="#999" stroke-width="0.7"/>
<path d="M186.0 576.7 L186.0 603.3" stroke="#999" stroke-width="0.7"/>
<path d="M193.0 576.7 L193.0 603.3" stroke="#999" stroke-width="0.7"/>
<rect x="209.7" y="537" width="20.3" height="66.3" fill="#f4f4f4" stroke="#707070" stroke-width="1"/>
<path d="M214.0 543.2 L214.0 546.8" stroke="#666" stroke-width="1"/>
<path d="M218.0 543.2 L218.0 546.8" stroke="#666" stroke-width="1"/>
<path d="M222.0 543.2 L222.0 546.8" stroke="#666" stroke-width="1"/>
<path d="M226.0 543.2 L226.0 546.8" stroke="#666" stroke-width="1"/>
<path d="M214.0 553.2 L214.0 556.8" stroke="#666" stroke-width="1"/>
<path d="M218.0 553.2 L218.0 556.8" stroke="#666" stroke-width="1"/>
<path d="M222.0 553.2 L222.0 556.8" stroke="#666" stroke-width="1"/>
<path d="M226.0 553.2 L226.0 556.8" stroke="#666" stroke-width="1"/>
<path d="M214.0 563.2 L214.0 566.8" stroke="#666" stroke-width="1"/>
<path d="M218.0 563.2 L218.0 566.8" stroke="#666" stroke-width="1"/>
<path d="M222.0 563.2 L222.0 566.8" stroke="#666" stroke-width="1"/>
<path d="M226.0 563.2 L226.0 566.8" stroke="#666" stroke-width="1"/>
<path d="M214.0 573.2 L214.0 576.8" stroke="#666" stroke-width="1"/>
<path d="M218.0 573.2 L218.0 576.8" stroke="#666" stroke-width="1"/>
<path d="M222.0 573.2 L222.0 576.8" stroke="#666" stroke-width="1"/>
<path d="M226.0 573.2 L226.0 576.8" stroke="#666" stroke-width="1"/>
<path d="M214.0 583.2 L214.0 586.8" stroke="#666" stroke-width="1"/>
<path d="M218.0 583.2 L218.0 586.8" stroke="#666" stroke-width="1"/>
<path d="M222.0 583.2 L222.0 586.8" stroke="#666" stroke-width="1"/>
<path d="M226.0 583.2 L226.0 586.8" stroke="#666" stroke-width="1"/>
<path d="M214.0 593.2 L214.0 596.8" stroke="#666" stroke-width="1"/>
<path d="M218.0 593.2 L218.0 596.8" stroke="#666" stroke-width="1"/>
<path d="M222.0 593.2 L222.0 596.8" stroke="#666" stroke-width="1"/>
<path d="M226.0 593.2 L226.0 596.8" stroke="#666" stroke-width="1"/>
<path d="M254.9 564.7 C250.8 564.7 251.5 557.4 256.8 558.4 C257.9 552.6 265.1 553.2 266.3 556.3 C271.0 554.2 277.0 559.5 273.9 564.2 C271.0 565.8 263.9 565.8 254.9 564.7 Z" fill="#ffffff" stroke="#707070" stroke-width="0.9" stroke-linejoin="round"/>
<path d="M289.3 559.7 C282.1 559.7 283.4 547.1 292.6 548.9 C294.7 539.0 307.4 539.9 309.5 545.3 C317.9 541.7 328.4 550.7 322.9 558.8 C317.9 561.5 305.2 561.5 289.3 559.7 Z" fill="#ffffff" stroke="#707070" stroke-width="0.9" stroke-linejoin="round"/>
<path d="M350.2 573.7 C345.9 573.7 346.7 564.7 352.3 566.0 C353.5 558.9 361.1 559.5 362.4 563.4 C367.4 560.8 373.8 567.2 370.5 573.1 C367.4 575.0 359.9 575.0 350.2 573.7 Z" fill="#ffffff" stroke="#707070" stroke-width="0.9" stroke-linejoin="round"/>
<path d="M239.2 584.2 L248 577.2 L256.8 584.2 Z" fill="#dedede" stroke="#707070" stroke-width="0.8" stroke-linejoin="round"/>
<path d="M294.2 584.2 L303 577.2 L311.8 584.2 Z" fill="#dedede" stroke="#707070" stroke-width="0.8" stroke-linejoin="round"/>
<path d="M265.3 578 L273.3 570.8 L281.3 578 Z" fill="#dedede" stroke="#707070" stroke-width="0.8" stroke-linejoin="round"/>
<rect x="239.2" y="584.2" width="26.1" height="19.1" fill="#fbfbfb" stroke="#707070" stroke-width="1"/>
<rect x="281.3" y="584.2" width="29.9" height="19.1" fill="#fbfbfb" stroke="#707070" stroke-width="1"/>
<rect x="265.3" y="578" width="16.0" height="25.3" fill="#fbfbfb" stroke="#707070" stroke-width="1"/>
<path d="M243.3 589.2 L243.3 592.2" stroke="#777" stroke-width="0.9"/>
<path d="M247.9 589.2 L247.9 592.2" stroke="#777" stroke-width="0.9"/>
<path d="M252.5 589.2 L252.5 592.2" stroke="#777" stroke-width="0.9"/>
<path d="M257.1 589.2 L257.1 592.2" stroke="#777" stroke-width="0.9"/>
<path d="M261.7 589.2 L261.7 592.2" stroke="#777" stroke-width="0.9"/>
<path d="M243.3 596.8 L243.3 599.8" stroke="#777" stroke-width="0.9"/>
<path d="M247.9 596.8 L247.9 599.8" stroke="#777" stroke-width="0.9"/>
<path d="M252.5 596.8 L252.5 599.8" stroke="#777" stroke-width="0.9"/>
<path d="M257.1 596.8 L257.1 599.8" stroke="#777" stroke-width="0.9"/>
<path d="M261.7 596.8 L261.7 599.8" stroke="#777" stroke-width="0.9"/>
<path d="M284.3 589.2 L284.3 592.2" stroke="#777" stroke-width="0.9"/>
<path d="M289.0 589.2 L289.0 592.2" stroke="#777" stroke-width="0.9"/>
<path d="M293.7 589.2 L293.7 592.2" stroke="#777" stroke-width="0.9"/>
<path d="M298.3 589.2 L298.3 592.2" stroke="#777" stroke-width="0.9"/>
<path d="M303.0 589.2 L303.0 592.2" stroke="#777" stroke-width="0.9"/>
<path d="M307.7 589.2 L307.7 592.2" stroke="#777" stroke-width="0.9"/>
<path d="M284.3 596.8 L284.3 599.8" stroke="#777" stroke-width="0.9"/>
<path d="M289.0 596.8 L289.0 599.8" stroke="#777" stroke-width="0.9"/>
<path d="M293.7 596.8 L293.7 599.8" stroke="#777" stroke-width="0.9"/>
<path d="M298.3 596.8 L298.3 599.8" stroke="#777" stroke-width="0.9"/>
<path d="M303.0 596.8 L303.0 599.8" stroke="#777" stroke-width="0.9"/>
<path d="M307.7 596.8 L307.7 599.8" stroke="#777" stroke-width="0.9"/>
<path d="M269.2 582.2 L269.2 585.2" stroke="#666" stroke-width="0.9"/>
<path d="M273.5 582.2 L273.5 585.2" stroke="#666" stroke-width="0.9"/>
<path d="M277.8 582.2 L277.8 585.2" stroke="#666" stroke-width="0.9"/>
<path d="M269.2 589.5 L269.2 592.5" stroke="#666" stroke-width="0.9"/>
<path d="M273.5 589.5 L273.5 592.5" stroke="#666" stroke-width="0.9"/>
<path d="M277.8 589.5 L277.8 592.5" stroke="#666" stroke-width="0.9"/>
<path d="M269.2 596.8 L269.2 599.8" stroke="#666" stroke-width="0.9"/>
<path d="M273.5 596.8 L273.5 599.8" stroke="#666" stroke-width="0.9"/>
<path d="M277.8 596.8 L277.8 599.8" stroke="#666" stroke-width="0.9"/>
<path d="M318 603.3 L318 572.5 L344.7 587.5 L344.7 603.3 Z" fill="#f0f0f0" stroke="#707070" stroke-width="1" stroke-linejoin="round"/>
<path d="M322.3 583.8 L322.3 586.8" stroke="#777" stroke-width="0.9"/>
<path d="M326.9 583.8 L326.9 586.8" stroke="#777" stroke-width="0.9"/>
<path d="M331.5 583.8 L331.5 586.8" stroke="#777" stroke-width="0.9"/>
<path d="M336.1 583.8 L336.1 586.8" stroke="#777" stroke-width="0.9"/>
<path d="M340.7 583.8 L340.7 586.8" stroke="#777" stroke-width="0.9"/>
<path d="M322.3 590.5 L322.3 593.5" stroke="#777" stroke-width="0.9"/>
<path d="M326.9 590.5 L326.9 593.5" stroke="#777" stroke-width="0.9"/>
<path d="M331.5 590.5 L331.5 593.5" stroke="#777" stroke-width="0.9"/>
<path d="M336.1 590.5 L336.1 593.5" stroke="#777" stroke-width="0.9"/>
<path d="M340.7 590.5 L340.7 593.5" stroke="#777" stroke-width="0.9"/>
<path d="M322.3 597.2 L322.3 600.2" stroke="#777" stroke-width="0.9"/>
<path d="M326.9 597.2 L326.9 600.2" stroke="#777" stroke-width="0.9"/>
<path d="M331.5 597.2 L331.5 600.2" stroke="#777" stroke-width="0.9"/>
<path d="M336.1 597.2 L336.1 600.2" stroke="#777" stroke-width="0.9"/>
<path d="M340.7 597.2 L340.7 600.2" stroke="#777" stroke-width="0.9"/>
<rect x="353.7" y="589.7" width="16.0" height="14.3" fill="#f4f4f4" stroke="#707070" stroke-width="1"/>
<rect x="44" y="628" width="367" height="63" fill="#3a8fd0"/>
<rect x="44" y="627" width="367" height="1.6" fill="#ffffff"/>
</svg>
<div class="t" style="left:60.5px;top:20.5px;font-size:14px;letter-spacing:3.1px;color:#555">ANAGRAMS</div>
<div class="t" style="left:328px;top:33px;font-size:10px;color:#333">menu</div>
<div class="t" style="left:18px;top:162px;font-size:17px;font-weight:500;letter-spacing:10.36px;color:#17324d;-webkit-text-stroke:0.75px #17324d">会社の隠れた魅力を発掘し</div>
<div class="t" style="left:18px;top:200px;font-size:17px;font-weight:500;letter-spacing:10.36px;color:#17324d;-webkit-text-stroke:0.75px #17324d">ビジネスにつなげる伴走者</div>
<div class="t" style="left:18px;top:239px;font-size:17px;font-weight:500;letter-spacing:10.36px;color:#17324d;-webkit-text-stroke:0.75px #17324d">それが、アナグラム</div>
<div class="a" style="left:132px;top:286px;width:217px;height:48px;border:2.5px solid #fff;border-radius:12px;background:#dbebf7;box-shadow:0 3px 8px rgba(0,0,0,0.12)"></div>
<div class="t" style="left:159px;top:302px;font-size:15px;font-weight:bold;color:#111;-webkit-text-stroke:0.3px #111">アナグラム株式会社</div>
<div class="a" style="left:299px;top:440px;width:44px;height:44px;border-radius:50%;background:#3a8fd0;box-shadow:0 2px 6px rgba(0,0,0,0.3)"></div>
<svg class="a" style="left:311px;top:452px" width="20" height="20" viewBox="0 0 20 20"><path d="M10 20 V3 M4 9 L10 3 L16 9" stroke="#fff" stroke-width="1.2" fill="none"/></svg>
<div class="t" style="left:15px;top:514.5px;font-size:19.5px;color:#fff;-webkit-text-stroke:0.55px #fff">アナグラムのブログ新</div>
<div class="a" style="left:234px;top:524px;width:116px;height:40px;border:1px solid #cfe3f3;border-radius:20px"></div>
<div class="t" style="left:251px;top:530px;font-size:13px;color:#fff">記事一覧</div>
<div class="a" style="left:10px;top:482px;width:47px;height:47px;border-radius:50%;background:#fff;box-shadow:0 2px 6px rgba(0,0,0,0.25)"></div>
<svg class="a" style="left:21px;top:498px" width="26" height="16" viewBox="0 0 26 16"><path d="M17 2.2 H7.2 A5.8 5.8 0 0 0 7.2 13.8 H10.5" stroke="#111" stroke-width="1.9" fill="none"/><circle cx="19" cy="8" r="5.6" stroke="#111" stroke-width="1.9" fill="none"/></svg>
</div>
<div id="rres" class="a"></div>
<div id="bres" class="a"></div>
<div class="a" style="left:215px;top:699px;width:26px;height:2px;background:#a8a8a8"></div>
<div class="a" style="left:215px;top:703px;width:26px;height:2px;background:#a8a8a8"></div>
<svg class="a" style="left:414px;top:693px" width="16" height="11" viewBox="0 0 16 11"><path d="M2.5 12 L13 1.5 M9 12 L14 7.5" stroke="#9c9c9c" stroke-width="1.8"/></svg>
<div class="a" style="left:418px;top:409px;width:2px;height:26px;background:#9a9a9a"></div>
<div class="a" style="left:422.5px;top:409px;width:2px;height:26px;background:#9a9a9a"></div>
<div id="dt" class="a"></div>
<!-- devtools content -->
<div class="a" style="left:457px;top:83px;width:562px;height:70px;background:#242424"></div>
<svg class="a" style="left:465px;top:98px" width="15" height="15" viewBox="0 0 15 15"><circle cx="7.5" cy="7.5" r="6.3" stroke="#7cacf8" stroke-width="1.3" fill="none"/><rect x="6.8" y="6.3" width="1.4" height="4.6" fill="#7cacf8"/><rect x="6.8" y="3.8" width="1.4" height="1.5" fill="#7cacf8"/></svg>
<div class="t" style="left:487px;top:99.3px;font-size:12.4px;color:#e3e3e3;-webkit-text-stroke-width:0.25px">DevTools is now available in Japanese!</div>
<div class="a" style="left:465px;top:122px;width:203px;height:24px;border-radius:12px;background:#a8c7fa"></div>
<div class="t" style="left:469.4px;top:128.7px;font-size:12.8px;color:#0b2f63;-webkit-text-stroke:0.4px #0b2f63">Always match Chrome's language</div>
<div class="a" style="left:672px;top:122px;width:176px;height:24px;border-radius:12px;background:#a8c7fa"></div>
<div class="t" style="left:676.6px;top:128.7px;font-size:12.8px;color:#0b2f63;-webkit-text-stroke:0.4px #0b2f63">Switch DevTools to Japanese</div>
<div class="a" style="left:853px;top:122px;width:109px;height:24px;border-radius:12px;border:1px solid #1c6f9c"></div>
<div class="t" style="left:858px;top:128.7px;font-size:12.8px;color:#8e8e8e;-webkit-text-stroke:0.2px #8e8e8e">Don't show again</div>
<svg class="a" style="left:1002px;top:114px" width="11" height="11" viewBox="0 0 11 11"><path d="M1 1 L10 10 M10 1 L1 10" stroke="#bdbdbd" stroke-width="1.3"/></svg>
<!-- elements toolbar -->
<div class="a" style="left:457px;top:153px;width:562px;height:28px;background:#313131;border-bottom:1px solid #3d3d3d"></div>
<svg class="a" style="left:460px;top:155px" width="56" height="27" viewBox="0 0 56 27"><g fill="#c8c8c8"><rect x="5.7" y="5" width="1.7" height="1.7"/><rect x="9" y="5" width="1.7" height="1.7"/><rect x="12.3" y="5" width="1.7" height="1.7"/><rect x="15.6" y="5" width="1.7" height="1.7"/><rect x="18.8" y="5" width="1.7" height="1.7"/><rect x="18.8" y="8" width="1.7" height="1.7"/><rect x="5.7" y="8.3" width="1.7" height="1.7"/><rect x="5.7" y="11.5" width="1.7" height="1.7"/><rect x="5.7" y="14.7" width="1.7" height="1.7"/><rect x="5.7" y="17.6" width="1.7" height="1.7"/><rect x="8.8" y="17.6" width="1.7" height="1.7"/></g><path d="M12.9 11.8 L19.6 18.5 M12.5 11.8 H19.4 M12.9 11.4 V18.4" stroke="#d0d0d0" stroke-width="1.7" fill="none"/><path d="M35.7 17 V6.5 H47.7 M33.2 17 H41" stroke="#7cacf8" stroke-width="1.7" fill="none"/><rect x="43.8" y="10.2" width="5" height="7.2" rx="1.2" stroke="#7cacf8" stroke-width="1.6" fill="none"/></svg>
<div class="a" style="left:519px;top:159.5px;width:1px;height:15px;background:#4a4a4a"></div>
<div class="t ui" style="left:537.3px;top:160.8px;color:#a3c4f8">Elements</div>
<div class="t ui" style="left:614px;top:160.8px">Console</div>
<div class="t ui" style="left:683.5px;top:160.8px">Sources</div>
<div class="t ui" style="left:753.9px;top:160.8px">Network</div>
<svg class="a" style="left:816px;top:163px" width="14" height="10" viewBox="0 0 14 10"><path d="M1.5 1 L5.5 5 L1.5 9 M7.5 1 L11.5 5 L7.5 9" stroke="#c8c8c8" stroke-width="1.4" fill="none"/></svg>
<div class="a" style="left:526px;top:179px;width:76px;height:2px;background:#7cacf8"></div>
<svg class="a" style="left:865px;top:161px" width="14" height="13" viewBox="0 0 14 13"><path d="M7 0.8 L13.3 12 H0.7 Z" fill="#f08a4b"/><rect x="6.3" y="4.5" width="1.4" height="4" fill="#313131"/><rect x="6.3" y="9.4" width="1.4" height="1.4" fill="#313131"/></svg>
<div class="t ui" style="left:882px;top:161.5px">1</div>
<svg class="a" style="left:899px;top:162px" width="12" height="12" viewBox="0 0 12 12"><path d="M1 1 H11 V9 H4 L1 11.5 Z" fill="#e5574f"/><path d="M4.2 3 L7.8 6.6 M7.8 3 L4.2 6.6" stroke="#313131" stroke-width="1.1"/></svg>
<div class="t ui" style="left:914.5px;top:161.5px">8</div>
<div class="a" style="left:933px;top:160px;width:1px;height:17px;background:#4a4a4a"></div>
<svg class="a" style="left:944px;top:160px" width="16" height="16" viewBox="0 0 16 16"><path d="M8 1.2 L9.6 1.5 L10 3.3 L11.5 4.1 L13.2 3.4 L14.3 4.7 L13.4 6.3 L13.7 8 L15 9.2 L14.4 10.8 L12.6 11 L11.6 12.4 L11.8 14.2 L10.3 15 L8.9 13.8 L7.1 13.8 L5.7 15 L4.2 14.2 L4.4 12.4 L3.4 11 L1.6 10.8 L1 9.2 L2.3 8 L2.6 6.3 L1.7 4.7 L2.8 3.4 L4.5 4.1 L6 3.3 L6.4 1.5 Z" stroke="#c8c8c8" stroke-width="1.3" fill="none" stroke-linejoin="round"/><circle cx="8" cy="8.4" r="2.3" fill="#c8c8c8"/></svg>
<svg class="a" style="left:977px;top:160px" width="6" height="16" viewBox="0 0 6 16"><g fill="#c8c8c8"><circle cx="3" cy="3" r="1.4"/><circle cx="3" cy="8" r="1.4"/><circle cx="3" cy="13" r="1.4"/></g></svg>
<!-- dom tree -->
<div class="a" style="left:457px;top:181px;width:562px;height:256px;background:#242424"></div>
<div class="a" style="left:457px;top:325.5px;width:562px;height:15.5px;background:#383838"></div>
<div class="t" style="left:463px;top:327px;font-size:11px;color:#c8c8c8;letter-spacing:-0.5px">···</div>
<div class="t dom" style="left:471.5px;top:185.5px;letter-spacing:-0.6px"><span style="color:#9a9a9a">&lt;!DOCTYPE html&gt;</span></div><div class="t dom" style="left:472px;top:201.5px;letter-spacing:0.0px"><span style="color:#7aaaf0">&lt;html</span> <span style="color:#a9c8ef">lang</span><span style="color:#7f9cc4">=</span><span style="color:#f28b54">"ja"</span><span style="color:#7aaaf0">&gt;</span></div><div class="t dom" style="left:484.5px;top:217.1px;letter-spacing:0.0px"><span style="color:#7aaaf0">&lt;head</span><span style="color:#7aaaf0">&gt;</span><span style="display:inline-block;width:13px;height:9px;border:1px solid #9a9a9a;border-radius:5px;vertical-align:-1px;margin:0 3px;position:relative"><span style="position:absolute;left:2px;top:3px;width:7px;height:1.5px;background:repeating-linear-gradient(90deg,#d0d0d0 0 1.5px,transparent 1.5px 3px)"></span></span><span style="color:#7aaaf0">&lt;/head</span><span style="color:#7aaaf0">&gt;</span></div><svg class="a" style="left:474px;top:220px" width="8" height="9" viewBox="0 0 8 9"><path d="M1 0.5 L7 4.5 L1 8.5 Z" fill="#c4c4c4"/></svg><div class="t dom" style="left:484.5px;top:233.1px;letter-spacing:0.0px"><span style="color:#7aaaf0">&lt;body</span><span style="color:#7aaaf0">&gt;</span></div><svg class="a" style="left:473.5px;top:236px" width="9" height="8" viewBox="0 0 9 8"><path d="M0.5 1 L8.5 1 L4.5 7.5 Z" fill="#c4c4c4"/></svg><div class="t dom" style="left:496px;top:249.0px;letter-spacing:-0.1px"><span style="color:#7aaaf0">&lt;div</span> <span style="color:#a9c8ef">id</span><span style="color:#7f9cc4">=</span><span style="color:#f28b54">"CybotCookiebotDialog"</span> <span style="color:#a9c8ef">name</span><span style="color:#7f9cc4">=</span><span style="color:#f28b54">"CybotCookiebotDialog"</span> <span style="color:#a9c8ef">role</span><span style="color:#7f9cc4">=</span><span style="color:#f28b54">"dialog"</span> <span style="color:#a9c8ef">aria-describedby</span><span style="color:#7f9cc4">=</span><span style="color:#f28b54">"CybotCookiebotDialogBodyContentTitle</span></div><svg class="a" style="left:485px;top:252px" width="8" height="9" viewBox="0 0 8 9"><path d="M1 0.5 L7 4.5 L1 8.5 Z" fill="#c4c4c4"/></svg><div class="t dom" style="left:493px;top:264.1px;letter-spacing:0.07px"><span style="color:#f28b54">botCookiebotDialogBodyContentTitle"</span> <span style="color:#a9c8ef">lang</span><span style="color:#7f9cc4">=</span><span style="color:#f28b54">"ja"</span> <span style="color:#a9c8ef">dir</span><span style="color:#7f9cc4">=</span><span style="color:#f28b54">"ltr"</span> <span style="color:#a9c8ef">ng-non-bindable</span> <span style="color:#a9c8ef">style</span><span style="color:#7f9cc4">=</span><span style="color:#f28b54">"display: none; padding-bottom</span></div><div class="t dom" style="left:493px;top:279.2px;letter-spacing:0.16px"><span style="color:#f28b54">ding-bottom: 18px; opacity: 0.05; top: 545px; width: 100%; height: auto;"</span><span style="color:#7aaaf0">&gt;</span><span style="display:inline-block;width:13px;height:9px;border:1px solid #9a9a9a;border-radius:5px;vertical-align:-1px;margin:0 3px;position:relative"><span style="position:absolute;left:2px;top:3px;width:7px;height:1.5px;background:repeating-linear-gradient(90deg,#d0d0d0 0 1.5px,transparent 1.5px 3px)"></span></span><span style="color:#7aaaf0">&lt;/div</span><span style="color:#7aaaf0">&gt;</span></div><div class="t dom" style="left:496.3px;top:295.2px;letter-spacing:0.0px"><span style="color:#7aaaf0">&lt;div</span> <span style="color:#a9c8ef">class</span><span style="color:#7f9cc4">=</span><span style="color:#f28b54">"wrapper"</span><span style="color:#7aaaf0">&gt;</span></div><svg class="a" style="left:484.5px;top:298px" width="9" height="8" viewBox="0 0 9 8"><path d="M0.5 1 L8.5 1 L4.5 7.5 Z" fill="#c4c4c4"/></svg><div class="t dom" style="left:508.5px;top:311.0px;letter-spacing:0.1px"><span style="color:#7aaaf0">&lt;header</span> <span style="color:#a9c8ef">id</span><span style="color:#7f9cc4">=</span><span style="color:#f28b54">"header"</span> <span style="color:#a9c8ef">style</span><span style="color:#7f9cc4">=</span><span style="color:#f28b54">"top: 0px;"</span><span style="color:#7aaaf0">&gt;</span></div><svg class="a" style="left:496.9px;top:314px" width="9" height="8" viewBox="0 0 9 8"><path d="M0.5 1 L8.5 1 L4.5 7.5 Z" fill="#c4c4c4"/></svg><div class="t dom" style="left:521px;top:327.0px;letter-spacing:-0.05px"><span style="color:#7aaaf0">&lt;div</span> <span style="color:#a9c8ef">class</span><span style="color:#7f9cc4">=</span><span style="color:#f28b54">"header-in"</span><span style="color:#7aaaf0">&gt;</span><span style="display:inline-block;width:13px;height:9px;border:1px solid #9a9a9a;border-radius:5px;vertical-align:-1px;margin:0 3px;position:relative"><span style="position:absolute;left:2px;top:3px;width:7px;height:1.5px;background:repeating-linear-gradient(90deg,#d0d0d0 0 1.5px,transparent 1.5px 3px)"></span></span><span style="color:#7aaaf0">&lt;/div</span><span style="color:#7aaaf0">&gt;</span> <span style="display:inline-block;border:1px solid #5aa0c8;border-radius:8px;color:#e3e3e3;font-size:10px;line-height:12px;padding:0 6px;line-height:11px;vertical-align:1px;letter-spacing:0;margin-left:3px">flex</span> <span style="color:#8a8a8a;font-style:italic">== $0</span></div><svg class="a" style="left:509.20000000000005px;top:330px" width="8" height="9" viewBox="0 0 8 9"><path d="M1 0.5 L7 4.5 L1 8.5 Z" fill="#c4c4c4"/></svg><div class="t dom" style="left:520px;top:343.2px;letter-spacing:0.35px"><span style="color:#9a9a9a">&lt;!--//header-in--&gt;</span></div><div class="t dom" style="left:508px;top:359.0px;letter-spacing:0.1px"><span style="color:#7aaaf0">&lt;/header</span><span style="color:#7aaaf0">&gt;</span></div><div class="t dom" style="left:508.5px;top:374.7px;letter-spacing:-0.05px"><span style="color:#7aaaf0">&lt;main</span> <span style="color:#a9c8ef">class</span><span style="color:#7f9cc4">=</span><span style="color:#f28b54">"home"</span><span style="color:#7aaaf0">&gt;</span><span style="display:inline-block;width:13px;height:9px;border:1px solid #9a9a9a;border-radius:5px;vertical-align:-1px;margin:0 3px;position:relative"><span style="position:absolute;left:2px;top:3px;width:7px;height:1.5px;background:repeating-linear-gradient(90deg,#d0d0d0 0 1.5px,transparent 1.5px 3px)"></span></span><span style="color:#7aaaf0">&lt;/main</span><span style="color:#7aaaf0">&gt;</span></div><svg class="a" style="left:497.4px;top:377px" width="8" height="9" viewBox="0 0 8 9"><path d="M1 0.5 L7 4.5 L1 8.5 Z" fill="#c4c4c4"/></svg><div class="t dom" style="left:496px;top:390.0px;letter-spacing:0.3px"><span style="color:#7aaaf0">&lt;/div</span><span style="color:#7aaaf0">&gt;</span></div><div class="t dom" style="left:496px;top:406.0px;letter-spacing:0.35px"><span style="color:#9a9a9a">&lt;!--//main-body--&gt;</span></div><div class="t dom" style="left:496px;top:422.0px;letter-spacing:0.35px"><span style="color:#7aaaf0">&lt;footer</span> <span style="color:#a9c8ef">id</span><span style="color:#7f9cc4">=</span><span style="color:#f28b54">"footer"</span><span style="color:#7aaaf0">&gt;</span><span style="display:inline-block;width:13px;height:9px;border:1px solid #9a9a9a;border-radius:5px;vertical-align:-1px;margin:0 3px;position:relative"><span style="position:absolute;left:2px;top:3px;width:7px;height:1.5px;background:repeating-linear-gradient(90deg,#d0d0d0 0 1.5px,transparent 1.5px 3px)"></span></span><span style="color:#7aaaf0">&lt;/footer</span><span style="color:#7aaaf0">&gt;</span></div><svg class="a" style="left:485px;top:424px" width="8" height="9" viewBox="0 0 8 9"><path d="M1 0.5 L7 4.5 L1 8.5 Z" fill="#c4c4c4"/></svg>
<div class="a" style="left:457px;top:433px;width:562px;height:1px;background:#474747"></div>
<div class="a" style="left:457px;top:434px;width:562px;height:16px;background:#232323"></div>
<div class="a" style="left:718px;top:434px;width:88px;height:16px;background:#0e4868"></div>
<div class="t dom" style="left:465.5px;top:443.5px;color:#d8d8d8">html</div>
<div class="t dom" style="left:503.5px;top:443.5px;color:#d8d8d8">body</div>
<div class="t dom" style="left:546.5px;top:443.5px;color:#d8d8d8">div.wrapper</div>
<div class="t dom" style="left:625px;top:443.5px;color:#d8d8d8">header#header</div>
<div class="t dom" style="left:724.5px;top:443.5px;color:#d8d8d8">div.header-in</div>
<!-- styles pane -->
<div class="a" style="left:457px;top:450px;width:562px;height:35px;background:#313131;border-bottom:1px solid #3d3d3d"></div>
<div class="t ui" style="left:466.4px;top:465px;color:#a3c4f8">Styles</div>
<div class="t ui" style="left:520.2px;top:465px">Computed</div>
<div class="t ui" style="left:599.6px;top:465px">Layout</div>
<div class="t ui" style="left:657.6px;top:465px">Event Listeners</div>
<div class="t ui" style="left:763.3px;top:465px">DOM Breakpoints</div>
<div class="t ui" style="left:882.5px;top:465px">Properties</div>
<svg class="a" style="left:954px;top:466px" width="14" height="10" viewBox="0 0 14 10"><path d="M1.5 1 L5.5 5 L1.5 9 M7.5 1 L11.5 5 L7.5 9" stroke="#c8c8c8" stroke-width="1.4" fill="none"/></svg>
<div class="a" style="left:462px;top:483px;width:49px;height:2px;background:#7cacf8"></div>
<div class="a" style="left:457px;top:486px;width:562px;height:208px;background:#242424"></div>
<div class="a" style="left:462px;top:489.5px;width:410px;height:19px;border:1px solid #6a6a6a;border-radius:4px"></div>
<div class="t ui" style="left:466.4px;top:493px;color:#9a9a9a">Filter</div>
<div class="t ui" style="left:880px;top:492.5px">:hov</div>
<div class="t ui" style="left:913px;top:492.5px">.cls</div>
<svg class="a" style="left:942px;top:490px" width="16" height="16" viewBox="0 0 16 16"><path d="M7.5 1.5 V13.5 M1.5 7.5 H13.5" stroke="#d0d0d0" stroke-width="1.5"/><path d="M15.5 11.5 V15.5 H11.5 Z" fill="#d0d0d0"/></svg>
<svg class="a" style="left:970px;top:491px" width="16" height="16" viewBox="0 0 16 16"><path d="M2 1.5 H14 V7.5 H2 Z" stroke="#d0d0d0" stroke-width="1.4" fill="none"/><path d="M2 7.5 H14 V9 H9.5 V14.5 H6.5 V9 H2 Z" fill="#d0d0d0"/><path d="M10 2 V4.5 M12 2 V4.5" stroke="#d0d0d0" stroke-width="1"/></svg>
<div class="a" style="left:457px;top:511px;width:562px;height:1px;background:#3a3a3a"></div>
<div class="t css" style="left:457.5px;top:516.8px;color:#8a8a8a">element.style <span style="color:#e3e3e3">{</span></div>
<div class="t css" style="left:461px;top:534.2px;color:#e3e3e3">}</div>
<div class="a" style="left:457px;top:552px;width:562px;height:1px;background:#3a3a3a"></div>
<div class="t css" style="left:461px;top:557.7px;color:#e3e3e3">.header-in {</div>
<div class="t css" style="left:943px;top:557.7px;color:#e3e3e3;text-decoration:underline">style.min.css</div>
<div class="t css" style="left:479px;top:575.8px;color:#50c2ec;letter-spacing:0.0px">position<span style="color:#c8c8c8">:</span></div><div class="t css" style="left:535px;top:575.8px;color:#e3e3e3">relative;</div>
<div class="t css" style="left:479px;top:591.9px;color:#50c2ec;letter-spacing:0.0px">padding-left<span style="color:#c8c8c8">:</span></div><div class="t css" style="left:557.2px;top:591.9px;color:#e3e3e3">8px;</div>
<div class="t css" style="left:479px;top:607.5px;color:#50c2ec;letter-spacing:0.0px">display<span style="color:#c8c8c8">:</span></div><div class="t css" style="left:529px;top:607.5px;color:#e3e3e3">flex; <span style="display:inline-block;width:15px;height:14px;vertical-align:-3px;margin-left:2px;background:repeating-linear-gradient(90deg,#8a8a8a 0 3.5px,transparent 3.5px 5.5px);-webkit-mask:repeating-linear-gradient(180deg,#000 0 5.5px,transparent 5.5px 8px)"></span></div>
<div class="t css" style="left:479px;top:623.4px;color:#50c2ec;letter-spacing:0.25px">justify-content<span style="color:#c8c8c8">:</span></div><div class="t css" style="left:572.1px;top:623.4px;color:#e3e3e3">space-between;</div>
<div class="t css" style="left:479px;top:639.5px;color:#50c2ec;letter-spacing:0.1px">background-color<span style="color:#c8c8c8">:</span></div><div class="t css" style="left:587.2px;top:639.5px;color:#e3e3e3"><span style="display:inline-block;width:10px;height:10px;background:#fff;border:1px solid #888;vertical-align:-1px;margin-right:4px"></span>#fff;</div>
<div class="t css" style="left:479px;top:655.5px;color:#50c2ec;letter-spacing:0.0px">min-height<span style="color:#c8c8c8">:</span></div><div class="t css" style="left:550.5px;top:655.5px;color:#e3e3e3">100%;</div>
<div class="t css" style="left:461px;top:670px;color:#e3e3e3">}</div>
<!-- red frame -->
<div class="red" style="left:438px;top:37px;width:305px;height:46px"></div>
<div class="red" style="left:438px;top:73px;width:581px;height:10px"></div>
<div class="red" style="left:438px;top:73px;width:10px;height:631px"></div>
<div class="red" style="left:1010px;top:73px;width:9px;height:631px"></div>
<div class="red" style="left:438px;top:694px;width:581px;height:10px"></div>
<div class="lbl" style="left:437px;top:43px;width:305px;font-size:27px;-webkit-text-stroke:1.1px #fff;transform:scaleY(1.1);transform-origin:0 0">デベロッパーツール</div>

<!-- blue frame -->
<div class="blue" style="left:275px;top:148px;width:187px;height:43px"></div>
<div class="blue" style="left:452px;top:149px;width:555px;height:10px"></div>
<div class="blue" style="left:452px;top:149px;width:10px;height:298px"></div>
<div class="blue" style="left:997px;top:149px;width:10px;height:298px"></div>
<div class="blue" style="left:452px;top:437px;width:555px;height:10px"></div>
<div class="lbl" style="left:272px;top:154px;width:187px;font-size:30px;letter-spacing:0.5px;transform:scaleY(1.08);transform-origin:0 0">HTML</div>

<!-- green frame -->
<div class="green" style="left:275px;top:450px;width:187px;height:43px"></div>
<div class="green" style="left:452px;top:449px;width:555px;height:10px"></div>
<div class="green" style="left:452px;top:449px;width:10px;height:242px"></div>
<div class="green" style="left:997px;top:449px;width:10px;height:242px"></div>
<div class="green" style="left:452px;top:681px;width:555px;height:10px"></div>
<div class="lbl" style="left:273.5px;top:456.5px;width:187px;font-size:30px;letter-spacing:0.8px;transform:scaleY(1.08);transform-origin:0 0">CSS</div>
</body>
</html>
